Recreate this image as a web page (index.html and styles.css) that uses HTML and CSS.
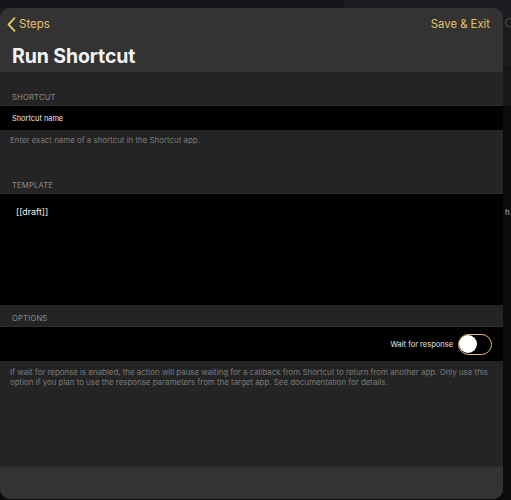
FILE: index.html
```html
<!DOCTYPE html>
<html lang="en">
<head>
<meta charset="utf-8">
<title>Run Shortcut</title>
<link rel="stylesheet" href="styles.css">
</head>
<body>
<div class="backdrop">
  <span class="bd-circle"></span>
  <span class="bd-text">h</span>
</div>
<div class="modal">
  <header class="header">
    <div class="nav">
      <a class="back">
        <svg class="chev" width="9" height="15" viewBox="0 0 9 15"><path d="M7.5 1.2 L1.6 7.5 L7.5 13.8" fill="none" stroke="#e6c26a" stroke-width="1.9" stroke-linecap="round" stroke-linejoin="round"/></svg>
        <span>Steps</span>
      </a>
      <a class="save">Save &amp; Exit</a>
    </div>
    <h1 class="title">Run Shortcut</h1>
  </header>
  <main class="content">
    <div class="sec-head sec-first">SHORTCUT</div>
    <div class="row field">Shortcut name</div>
    <p class="foot foot-short">Enter exact name of a shortcut in the Shortcut app.</p>
    <div class="sec-head sec-template">TEMPLATE</div>
    <div class="template">[[draft]]</div>
    <div class="sec-head sec-options">OPTIONS</div>
    <div class="row switch-row">
      <span class="switch-label">Wait for response</span>
      <span class="switch"><span class="knob"></span></span>
    </div>
    <p class="foot">If wait for reponse is enabled, the action will pause waiting for a callback from Shortcut to return from another app. Only use this option if you plan to use the response parameters from the target app. See documentation for details.</p>
  </main>
  <footer class="bottom"></footer>
</div>
</body>
</html>
```
FILE: styles.css
```css
html, body {
  margin: 0;
  padding: 0;
}
body {
  width: 511px;
  height: 500px;
  overflow: hidden;
  position: relative;
  font-family: Inter, "Liberation Sans", sans-serif;
  background:
    linear-gradient(#15161a, #15161a) 0 0 / 344px 8px no-repeat,
    linear-gradient(#1b1c20, #1b1c20) 0 0 / 100% 66px no-repeat,
    linear-gradient(#16171b, #16171b) 0 66px / 100% 40px no-repeat,
    #0b0b0d;
  padding-top: 8px;
  box-sizing: border-box;
}
.backdrop {
  position: absolute;
  left: 503px;
  top: 0;
  width: 8px;
  height: 500px;
}
.bd-circle {
  position: absolute;
  left: 2px;
  top: 18px;
  width: 7px;
  height: 7px;
  border: 1px solid #555;
  border-radius: 50%;
}
.bd-text {
  position: absolute;
  left: 2px;
  top: 207px;
  font-size: 8px;
  color: #8a8a8a;
  font-weight: 600;
}
.modal {
  position: relative;
  width: 503px;
  height: 491px;
  border-radius: 10px;
  overflow: hidden;
  display: flex;
  flex-direction: column;
  background: #242424;
}
.header {
  background: #333333;
  height: 64px;
  flex: none;
  box-sizing: border-box;
  padding: 8px 13px 0 7px;
}
.nav {
  display: flex;
  justify-content: space-between;
  align-items: center;
  height: 16px;
}
.back {
  display: flex;
  align-items: center;
  gap: 3px;
  color: #e6c26a;
  font-size: 11.5px;
}
.chev {
  display: block;
}
.save {
  color: #e6c26a;
  font-size: 11.3px;
}
.title {
  margin: 12px 0 0 5px;
  font-size: 19.5px;
  line-height: 24px;
  font-weight: 700;
  color: #f2f2f2;
  letter-spacing: -0.1px;
}
.content {
  flex: 1;
  display: flex;
  flex-direction: column;
}
.sec-head {
  font-size: 7.6px;
  color: #8c8c8c;
  letter-spacing: 0.2px;
  padding: 0 12px;
  box-sizing: border-box;
  display: flex;
  align-items: flex-end;
  border-bottom: 1px solid #2f2f2f;
}
.sec-first {
  height: 34px;
  padding-bottom: 3px;
}
.sec-template {
  height: 31px;
  padding-bottom: 3px;
  margin-top: 18px;
}
.sec-options {
  height: 22px;
  padding-bottom: 3px;
}
.row {
  background: #000;
  display: flex;
  align-items: center;
  box-sizing: border-box;
}
.field {
  height: 24px;
  padding: 0 12px;
  color: #eaeaea;
  font-size: 7.4px;
}
.foot {
  margin: 0;
  padding: 6px 10px 0;
  font-size: 7.9px;
  line-height: 10px;
  color: #7a7a7a;
}
.foot-short {
  padding-top: 5px;
}
.template {
  background: #000;
  height: 111px;
  box-sizing: border-box;
  padding: 12px 16px;
  color: #f0f0f0;
  font-size: 8.8px;
  line-height: 12px;
}
.switch-row {
  height: 34px;
  justify-content: flex-end;
  padding-right: 11px;
  gap: 5px;
}
.switch-label {
  color: #e6e6e6;
  font-size: 7.5px;
}
.switch {
  width: 34px;
  height: 21px;
  box-sizing: border-box;
  border: 1.5px solid #e6c26a;
  border-radius: 11px;
  background: #000;
  display: flex;
  align-items: center;
  padding-left: 0;
}
.knob {
  width: 18px;
  height: 18px;
  border-radius: 50%;
  background: #fff;
}
.bottom {
  flex: none;
  height: 32px;
  background: #333333;
  border-top: 1px solid #2a2a2a;
}
```
